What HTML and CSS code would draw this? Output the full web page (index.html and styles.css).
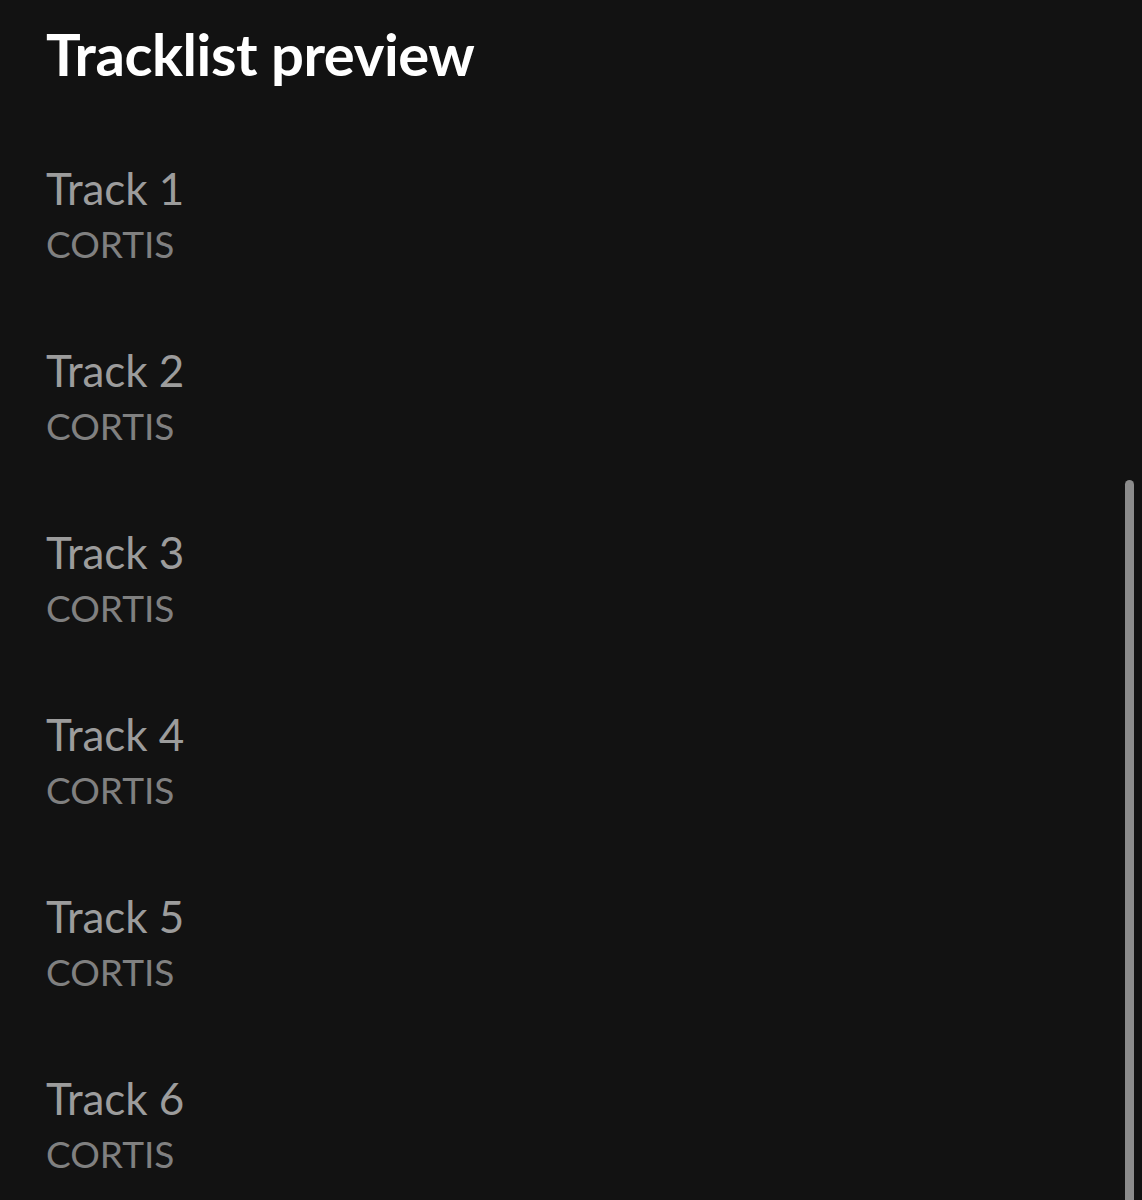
FILE: index.html
```html
<!DOCTYPE html>
<html>
<head>
<meta charset="utf-8">
<link rel="stylesheet" href="styles.css">
</head>
<body>
<main class="page">
  <h1 class="title">Tracklist preview</h1>
  <ul class="tracks">
    <li class="track"><div class="name">Track 1</div><div class="artist">CORTIS</div></li>
    <li class="track"><div class="name">Track 2</div><div class="artist">CORTIS</div></li>
    <li class="track"><div class="name">Track 3</div><div class="artist">CORTIS</div></li>
    <li class="track"><div class="name">Track 4</div><div class="artist">CORTIS</div></li>
    <li class="track"><div class="name">Track 5</div><div class="artist">CORTIS</div></li>
    <li class="track"><div class="name">Track 6</div><div class="artist">CORTIS</div></li>
  </ul>
  <div class="scrollbar"></div>
</main>
</body>
</html>
```
FILE: styles.css
```css
html, body {
  margin: 0;
  padding: 0;
  background: #121212;
  height: 1200px;
  overflow: hidden;
}
.page {
  position: relative;
  height: 1200px;
  padding: 0 0 0 46px;
  font-family: "Lato", "Liberation Sans", sans-serif;
}
.title {
  margin: 0;
  padding-top: 22px;
  font-size: 58px;
  line-height: 64px;
  font-weight: 700;
  color: #ffffff;
  letter-spacing: -0.4px;
}
.tracks {
  list-style: none;
  margin: 0;
  padding: 0;
  padding-top: 78px;
}
.track {
  height: 182px;
}
.name {
  font-size: 44px;
  line-height: 48px;
  letter-spacing: -0.1px;
  color: #9c9c9c;
}
.artist {
  margin-top: 11px;
  font-size: 37px;
  line-height: 42px;
  color: #808080;
}
.scrollbar {
  position: absolute;
  right: 8px;
  top: 480px;
  bottom: 0;
  width: 9px;
  border-radius: 5px 5px 0 0;
  background: #8c8c8c;
}
```
